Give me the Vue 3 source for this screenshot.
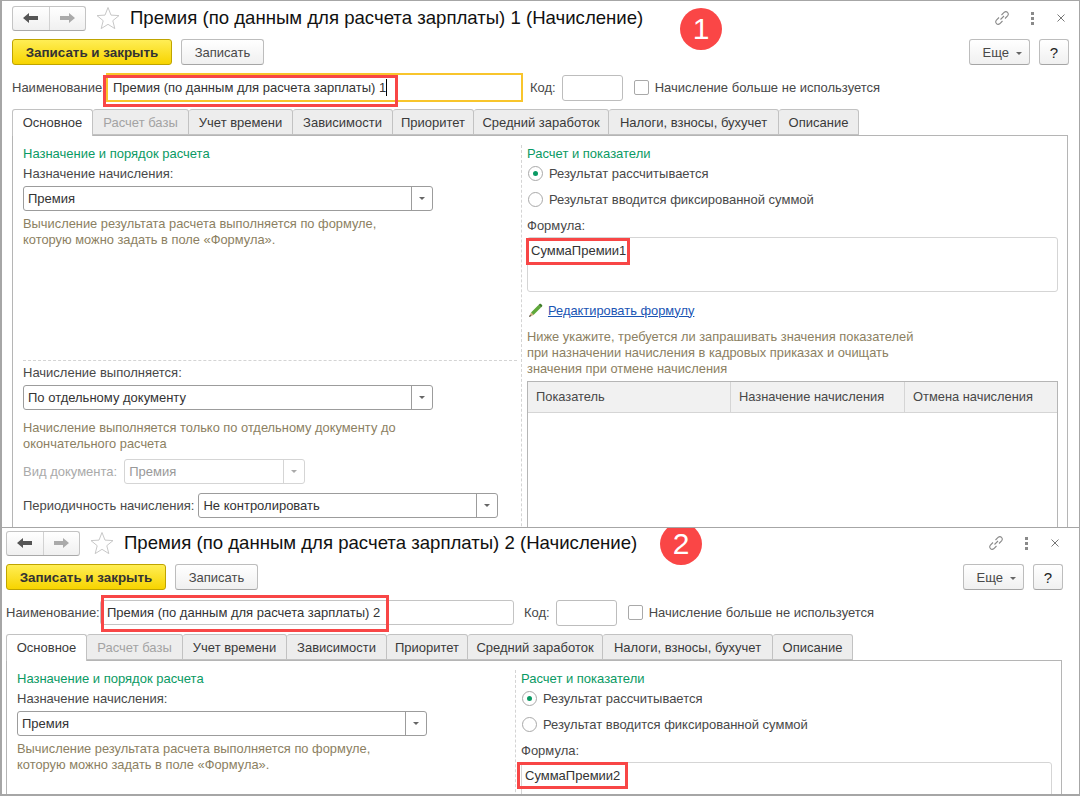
<script setup>
const forms = [
  { id: 1, name: 'Премия (по данным для расчета зарплаты) 1', formula: 'СуммаПремии1' },
  { id: 2, name: 'Премия (по данным для расчета зарплаты) 2', formula: 'СуммаПремии2' }
]

const tabs = [
  { label: 'Основное', width: 81 },
  { label: 'Расчет базы', width: 96 },
  { label: 'Учет времени', width: 104 },
  { label: 'Зависимости', width: 100 },
  { label: 'Приоритет', width: 81 },
  { label: 'Средний заработок', width: 135 },
  { label: 'Налоги, взносы, бухучет', width: 170 },
  { label: 'Описание', width: 80 }
]
</script>

<template>
  <div class="page">
    <section v-for="form in forms" :key="form.id" class="win" :class="'win-' + form.id">
      <span class="badge">{{ form.id }}</span>

      <header class="titlebar">
        <div class="nav">
          <button class="nav-btn">
            <svg width="18" height="14" viewBox="0 0 18 14"><path d="M1 7 7 2v3h9v4H7v3z" fill="#555" /></svg>
          </button>
          <button class="nav-btn">
            <svg width="18" height="14" viewBox="0 0 18 14"><path d="M17 7 11 2v3H2v4h9v3z" fill="#aaa" /></svg>
          </button>
        </div>
        <svg class="star" width="24" height="24" viewBox="0 0 24 24">
          <path d="M12 1.500l3 7.600 8 .5-6.200 5.100 2 7.900L12 18.300l-6.800 4.300 2-7.900L1 9.600l8-.5z" fill="#fff" stroke="#c8c8c8" />
        </svg>
        <h1 class="title">{{ form.name }} (Начисление)</h1>
        <div class="win-tools">
          <svg width="18" height="18" viewBox="0 0 18 18" fill="none" stroke="#8a8a8a" stroke-width="1.100">
            <path d="M7.500 10.500 11 7M6 8.500l-2.800 2.800a2.500 2.500 0 0 0 3.500 3.500L9.500 12M8.500 6l2.800-2.800a2.500 2.500 0 0 1 3.500 3.500L12 9.500" />
          </svg>
          <span class="dots"><i></i><i></i><i></i></span>
          <svg width="10" height="10" viewBox="0 0 10 10" stroke="#777" stroke-width="1"><path d="M1.500 1.500l7 7M8.500 1.500l-7 7" /></svg>
        </div>
      </header>

      <div class="toolbar">
        <button class="btn btn-primary">Записать и закрыть</button>
        <button class="btn btn-save">Записать</button>
        <button class="btn btn-more">Еще <span class="caret"></span></button>
        <button class="btn btn-help">?</button>
      </div>

      <div class="name-row">
        <label class="name-label">Наименование:</label>
        <div class="name-input">
          <span>{{ form.name }}</span><span v-if="form.id === 1" class="cursor"></span>
          <span class="mark name-mark"></span>
        </div>
        <label class="code-label">Код:</label>
        <div class="code-input"></div>
        <span class="checkbox"></span>
        <span class="check-label">Начисление больше не используется</span>
      </div>

      <nav class="tabs">
        <span
          v-for="(tab, i) in tabs"
          :key="tab.label"
          class="tab"
          :class="{ active: i === 0, muted: i === 1 }"
          :style="{ width: tab.width + 'px' }"
        >{{ tab.label }}</span>
      </nav>

      <div class="pane">
        <div class="col-left">
          <div class="block-top">
            <h2 class="group">Назначение и порядок расчета</h2>
            <div class="label">Назначение начисления:</div>
            <div class="select sel-wide"><span class="sel-text">Премия</span><span class="sel-btn"><i class="caret"></i></span></div>
            <p class="hint">Вычисление результата расчета выполняется по формуле,<br />которую можно задать в поле «Формула».</p>
          </div>
          <div v-if="form.id === 1" class="block-bottom">
            <div class="label">Начисление выполняется:</div>
            <div class="select sel-wide"><span class="sel-text">По отдельному документу</span><span class="sel-btn"><i class="caret"></i></span></div>
            <p class="hint hint-lower">Начисление выполняется только по отдельному документу до<br />окончательного расчета</p>
            <div class="inline-row disabled">
              <span class="label-inline">Вид документа:</span>
              <div class="select sel-doc"><span class="sel-text">Премия</span><span class="sel-btn"><i class="caret"></i></span></div>
            </div>
            <div class="inline-row period">
              <span class="label-inline">Периодичность начисления:</span>
              <div class="select sel-period"><span class="sel-text">Не контролировать</span><span class="sel-btn"><i class="caret"></i></span></div>
            </div>
          </div>
        </div>

        <div class="col-right">
          <h2 class="group group-right">Расчет и показатели</h2>
          <div class="radio-row"><span class="radio on"></span>Результат рассчитывается</div>
          <div class="radio-row"><span class="radio"></span>Результат вводится фиксированной суммой</div>
          <div class="formula-label">Формула:</div>
          <div class="formula">
            {{ form.formula }}
            <span class="mark formula-mark"></span>
          </div>
          <template v-if="form.id === 1">
            <div class="edit-row">
              <svg width="16" height="16" viewBox="0 0 16 16">
                <path d="M4 10.500 11.500 3l2.500 2.500L6.500 13z" fill="#5fa83a" />
                <path d="M11.500 3l1-1c.5-.5 1-.5 1.500 0l1 1c.5.5.5 1 0 1.500l-1 1z" fill="#3f7d28" />
                <path d="M4 10.500 2 15l4.500-2z" fill="#c9a877" />
                <path d="M3 12.800 2 15l2.300-1z" fill="#444" />
              </svg>
              <a class="link">Редактировать формулу</a>
            </div>
            <p class="hint hint-table">Ниже укажите, требуется ли запрашивать значения показателей<br />при назначении начисления в кадровых приказах и очищать<br />значения при отмене начисления</p>
            <div class="table">
              <div class="thead">
                <span class="th th-1">Показатель</span>
                <span class="th th-2">Назначение начисления</span>
                <span class="th th-3">Отмена начисления</span>
              </div>
            </div>
          </template>
        </div>
      </div>
    </section>
  </div>
</template>

<style scoped>
.page {
  width: 1080px;
  height: 796px;
  overflow: hidden;
  background: #fff;
  font-family: "Liberation Sans", Arial, sans-serif;
  font-size: 13px;
  color: #484848;
}

.win {
  position: relative;
  box-sizing: border-box;
  width: 1080px;
  overflow: hidden;
  border: 1px solid #a6a6a6;
  border-width: 1px 1px 0 2px;
  background: #fff;
}

.win-1 {
  height: 527px;
  padding-left: 10px;
}

.win-2 {
  height: 269px;
  padding-left: 4px;
  border-bottom-width: 2px;
}

.badge {
  position: absolute;
  width: 42px;
  height: 42px;
  border-radius: 50%;
  background: #fa4646;
  color: #fff;
  font-size: 30px;
  line-height: 42px;
  text-align: center;
}

.win-1 .badge {
  left: 678px;
  top: 7px;
}

.win-2 .badge {
  left: 658px;
  top: -5px;
}

.titlebar {
  display: flex;
  align-items: center;
  width: 1056px;
  height: 34px;
}

.win-2 .titlebar {
  margin-top: -2px;
}

.nav {
  display: flex;
  width: 74px;
  height: 25px;
  box-sizing: border-box;
  border: 1px solid #c4c4c4;
  border-bottom-color: #a9a9a9;
  border-radius: 3px;
  overflow: hidden;
  background: linear-gradient(#fff, #f0f0f0);
}

.nav-btn {
  flex: 1;
  padding: 0;
  border: 0;
  background: none;
  display: flex;
  align-items: center;
  justify-content: center;
}

.nav-btn + .nav-btn {
  border-left: 1px solid #d2d2d2;
}

.star {
  margin-left: 10px;
}

.title {
  margin: 0 0 0 10px;
  font-size: 18.600px;
  font-weight: 400;
  color: #111;
  white-space: nowrap;
}

.win-tools {
  display: flex;
  align-items: center;
  gap: 20px;
  margin-left: auto;
  padding-right: 2px;
}

.dots {
  display: flex;
  flex-direction: column;
  gap: 2px;
  margin-right: 2px;
}

.dots i {
  width: 3px;
  height: 3px;
  background: #8a8a8a;
}

.toolbar {
  display: flex;
  width: 1057px;
  height: 27px;
  margin-top: 4px;
}

.btn {
  box-sizing: border-box;
  height: 26px;
  padding: 0;
  border: 1px solid #bdbdbd;
  border-bottom-color: #a5a5a5;
  border-radius: 3px;
  background: linear-gradient(#fff, #f0f0f0);
  color: #484848;
  font-family: inherit;
  font-size: 13px;
}

.btn-primary {
  width: 160px;
  border-color: #bfa400;
  background: linear-gradient(#ffee55, #f7d400);
  color: #333;
  font-weight: 700;
  font-size: 13.400px;
}

.btn-save {
  width: 83px;
  margin-left: 9px;
}

.btn-more {
  width: 61px;
  margin-left: auto;
  padding-left: 5px;
}

.btn-help {
  width: 30px;
  margin-left: 9px;
  color: #222;
  font-size: 15px;
}

.caret {
  display: inline-block;
  width: 0;
  height: 0;
  border: 3px solid transparent;
  border-top: 3px solid #666;
  border-bottom: 0;
  margin-left: 3px;
  vertical-align: middle;
}

.name-row {
  display: flex;
  align-items: center;
  height: 29px;
  margin-top: 7px;
}

.name-label {
  width: 94px;
  white-space: nowrap;
}

.name-input {
  position: relative;
  display: flex;
  align-items: center;
  box-sizing: border-box;
  width: 417px;
  height: 29px;
  padding-left: 5px;
  border: 2px solid #f8c52c;
  color: #333;
}

.cursor {
  width: 1px;
  height: 17px;
  background: #000;
}

.win-2 .name-input {
  width: 414px;
  height: 25px;
  padding-left: 6px;
  border: 1px solid #c4c4c4;
  border-radius: 3px;
}

.mark {
  position: absolute;
  box-sizing: border-box;
  border: 3px solid #f84646;
  pointer-events: none;
}

.name-mark {
  left: -5px;
  top: 0;
  width: 295px;
  height: 32px;
}

.win-2 .name-mark {
  left: 0;
  top: -6px;
  width: 288px;
  height: 37px;
}

.code-label {
  margin-left: 7px;
}

.win-2 .code-label {
  margin-left: 10px;
}

.code-input {
  box-sizing: border-box;
  width: 61px;
  height: 26px;
  margin-left: 6px;
  border: 1px solid #bdbdbd;
  border-radius: 3px;
}

.checkbox {
  box-sizing: border-box;
  width: 15px;
  height: 15px;
  margin-left: 11px;
  border: 1px solid #a9a9a9;
  border-radius: 2px;
}

.check-label {
  margin-left: 6px;
}

.tabs {
  display: flex;
  height: 26px;
  margin-top: 7px;
}

.tab {
  box-sizing: border-box;
  height: 26px;
  padding-top: 5px;
  border: 1px solid #c2c2c2;
  border-left-width: 0;
  border-radius: 3px 3px 0 0;
  background: #ededed;
  text-align: center;
  white-space: nowrap;
  color: #3a3a3a;
}

.tab.active {
  position: relative;
  z-index: 1;
  height: 27px;
  border-left-width: 1px;
  border-bottom: 0;
  background: #fff;
}

.tab.muted {
  color: #a3a3a3;
}

.pane {
  display: grid;
  grid-template-columns: 508px 547px;
  box-sizing: border-box;
  width: 1056px;
  overflow: hidden;
  border: 1px solid #b5b5b5;
  border-bottom: 0;
}

.win-1 .pane {
  height: 392px;
}

.win-2 .pane {
  height: 140px;
}

.col-left {
  padding: 9px 4px 0 10px;
}

.win-1 .block-top {
  height: 215px;
  border-bottom: 1px dashed #d4d4d4;
}

.block-bottom {
  padding-top: 3px;
}

.col-right {
  margin-top: 9px;
  padding: 0 9px 0 5px;
  border-left: 1px dashed #d4d4d4;
}

.group {
  height: 20px;
  margin: 0;
  font-size: 13px;
  font-weight: 400;
  line-height: 18px;
  color: #0a9a64;
}

.group-right {
  height: 15px;
}

.label {
  height: 21px;
  line-height: 18px;
}

.select {
  display: flex;
  align-items: center;
  box-sizing: border-box;
  height: 25px;
  border: 1px solid #9c9c9c;
  border-radius: 3px;
  color: #333;
}

.sel-wide {
  width: 410px;
}

.sel-text {
  flex: 1;
  padding-left: 4px;
}

.sel-btn {
  display: flex;
  align-items: center;
  justify-content: center;
  box-sizing: border-box;
  width: 21px;
  height: 100%;
  border-left: 1px solid #9c9c9c;
}

.sel-btn .caret {
  margin: 0;
}

.hint {
  margin: 5px 0 0;
  font-size: 12.870px;
  line-height: 16px;
  color: #8c7f62;
}

.hint-lower {
  margin-top: 10px;
}

.inline-row {
  display: flex;
  align-items: center;
}

.disabled {
  margin-top: 7px;
  color: #aaa;
}

.label-inline {
  white-space: nowrap;
}

.sel-doc {
  width: 181px;
  margin-left: 7px;
  border-color: #d5d5d5;
  color: #999;
}

.sel-doc .sel-btn {
  border-left-color: #d5d5d5;
}

.sel-doc .caret {
  border-top-color: #aaa;
}

.period {
  margin-top: 9px;
}

.sel-period {
  width: 300px;
  margin-left: 4px;
}

.radio-row {
  display: flex;
  align-items: center;
  height: 26px;
}

.radio {
  position: relative;
  box-sizing: border-box;
  width: 15px;
  height: 15px;
  margin: 0 6px 0 1px;
  border: 1px solid #a9a9a9;
  border-radius: 50%;
}

.radio.on::after {
  content: "";
  position: absolute;
  left: 4px;
  top: 4px;
  width: 5px;
  height: 5px;
  border-radius: 50%;
  background: #0a9a64;
}

.formula-label {
  height: 15px;
  margin-top: 5px;
  line-height: 18px;
}

.formula {
  position: relative;
  box-sizing: border-box;
  width: 531px;
  height: 55px;
  margin-top: 5px;
  padding: 5px 3px;
  border: 1px solid #d5d5d5;
  border-radius: 3px;
  color: #333;
}

.formula-mark {
  left: -2px;
  top: 0;
  width: 104px;
  height: 27px;
}

.win-2 .formula-mark {
  left: -5px;
  top: -1px;
  width: 111px;
  height: 27px;
}

.edit-row {
  display: flex;
  align-items: center;
  gap: 5px;
  height: 16px;
  margin-top: 10px;
}

.link {
  font-size: 12.870px;
  color: #1a55b4;
  text-decoration: underline;
}

.hint-table {
  margin-top: 11px;
}

.table {
  box-sizing: border-box;
  width: 531px;
  height: 200px;
  margin-top: 4px;
  border: 1px solid #b5b5b5;
}

.thead {
  display: flex;
  height: 30px;
  border-bottom: 1px solid #d5d5d5;
  background: #f1f1f1;
}

.th {
  box-sizing: border-box;
  padding: 7px 8px 0;
  border-right: 1px solid #d5d5d5;
  font-size: 12.870px;
}

.th-1 {
  width: 203px;
}

.th-2 {
  width: 174px;
}

.th-3 {
  flex: 1;
  border-right: 0;
}
</style>
